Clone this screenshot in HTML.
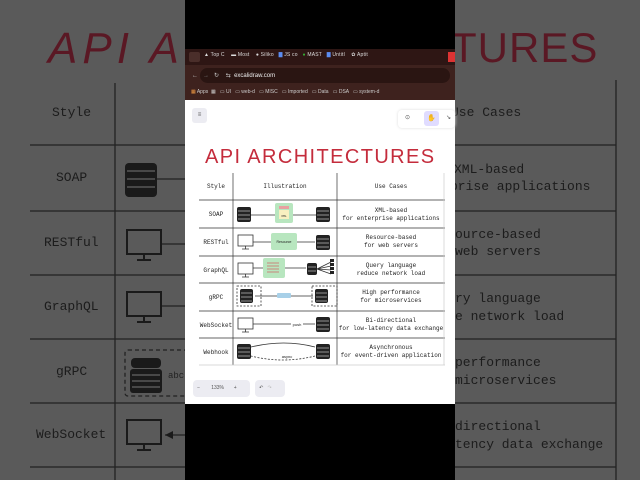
<!DOCTYPE html>
<html><head><meta charset="utf-8"><style>
*{margin:0;padding:0;box-sizing:border-box}
body{width:640px;height:480px;overflow:hidden;background:#000;position:relative;font-family:"Liberation Sans",sans-serif}
.side{position:absolute;top:0;height:480px;background:#5a5a5a;overflow:hidden}
.m{font-family:"Liberation Mono",monospace;color:#1c1c1c;position:absolute;white-space:nowrap}
.t{position:absolute;white-space:nowrap}
</style></head><body>
<!-- left side -->
<div class="side" style="left:0;width:185px">
<svg width="185" height="480" style="position:absolute;left:0;top:0">
<text x="48" y="63" font-family="Liberation Sans" font-style="italic" font-size="44" fill="#5a1824" letter-spacing="5">API A</text>
<g stroke="#222" stroke-width="1.3" fill="none">
<line x1="115" y1="83" x2="115" y2="480"/>
<line x1="30" y1="145" x2="185" y2="145"/><line x1="30" y1="211" x2="185" y2="211"/>
<line x1="30" y1="275" x2="185" y2="275"/><line x1="30" y1="339" x2="185" y2="339"/>
<line x1="30" y1="403" x2="185" y2="403"/><line x1="30" y1="467" x2="185" y2="467"/>
<line x1="157" y1="179" x2="185" y2="179"/><line x1="162" y1="244" x2="185" y2="244"/>
<line x1="162" y1="306" x2="185" y2="306"/><line x1="165" y1="435" x2="185" y2="435"/>
<rect x="125" y="350" width="62" height="46" rx="3" stroke-dasharray="4 3"/>
</g>
<g fill="#1a1a1a">
<rect x="125" y="163" width="32" height="34" rx="4"/><rect x="130" y="369" width="32" height="24" rx="3"/><rect x="131" y="358" width="30" height="10" rx="4"/>
</g>
<g stroke="#777" stroke-width="1"><line x1="127" y1="171" x2="155" y2="171"/><line x1="127" y1="179" x2="155" y2="179"/><line x1="127" y1="187" x2="155" y2="187"/>
<line x1="132" y1="375" x2="160" y2="375"/><line x1="132" y1="381" x2="160" y2="381"/><line x1="132" y1="387" x2="160" y2="387"/></g>
<g stroke="#1a1a1a" stroke-width="2" fill="none">
<rect x="127" y="230" width="34" height="24"/><line x1="137" y1="260" x2="151" y2="260"/><line x1="144" y1="254" x2="144" y2="260"/>
<rect x="127" y="292" width="34" height="24"/><line x1="137" y1="322" x2="151" y2="322"/><line x1="144" y1="316" x2="144" y2="322"/>
<rect x="127" y="420" width="34" height="24"/><line x1="137" y1="450" x2="151" y2="450"/><line x1="144" y1="444" x2="144" y2="450"/>
</g>
<polygon points="165,435 173,431 173,439" fill="#1a1a1a"/>
<text x="168" y="378" font-family="Liberation Mono" font-size="9" fill="#222">abc</text>
</svg>
<div class="m" style="left:52px;top:105px;font-size:13px">Style</div>
<div class="m" style="left:56px;top:170px;font-size:13px">SOAP</div>
<div class="m" style="left:44px;top:235px;font-size:13px">RESTful</div>
<div class="m" style="left:44px;top:299px;font-size:13px">GraphQL</div>
<div class="m" style="left:56px;top:364px;font-size:13px">gRPC</div>
<div class="m" style="left:36px;top:427px;font-size:13px">WebSocket</div>
</div>
<!-- right side -->
<div class="side" style="left:455px;width:185px">
<svg width="185" height="480" style="position:absolute;left:0;top:0">
<text x="-4" y="62" font-family="Liberation Sans" font-size="42" fill="#5a1824" letter-spacing="1">TURES</text>
<g stroke="#222" stroke-width="1.3">
<line x1="161" y1="80" x2="161" y2="480"/>
<line x1="0" y1="145" x2="161" y2="145"/><line x1="0" y1="211" x2="161" y2="211"/>
<line x1="0" y1="275" x2="161" y2="275"/><line x1="0" y1="339" x2="161" y2="339"/>
<line x1="0" y1="403" x2="161" y2="403"/><line x1="0" y1="467" x2="161" y2="467"/>
</g></svg>
<div class="m" style="left:-4px;top:105px;font-size:13px">Use Cases</div>
<div class="m" style="left:-1px;top:162px;font-size:13px">XML-based</div>
<div class="m" style="left:-5px;top:179px;font-size:13px">prise applications</div>
<div class="m" style="left:0px;top:227px;font-size:13px">ource-based</div>
<div class="m" style="left:0px;top:244px;font-size:13px"> web servers</div>
<div class="m" style="left:0px;top:291px;font-size:13px">ry language</div>
<div class="m" style="left:0px;top:309px;font-size:13px">e network load</div>
<div class="m" style="left:0px;top:355px;font-size:13px">  performance</div>
<div class="m" style="left:0px;top:373px;font-size:13px">microservices</div>
<div class="m" style="left:0px;top:419px;font-size:13px"> directional</div>
<div class="m" style="left:0px;top:437px;font-size:13px">tency data exchange</div>
</div>
<!-- center -->
<div style="position:absolute;left:185px;top:49px;width:270px;height:16px;background:#2e1614"></div>
<div style="position:absolute;left:185px;top:65px;width:270px;height:35px;background:#3e221e"></div>
<div style="position:absolute;left:200px;top:68px;width:250px;height:15px;background:#2a1512;border-radius:8px"></div>
<div class="t" style="left:189px;top:52px;width:11px;height:10px;background:#4a2e2a;border-radius:2px"></div>
<div class="t" style="left:204px;top:52px;font-size:5px;color:#ddd;letter-spacing:.2px">▲ Top C &nbsp;&nbsp; ▬ Most &nbsp;&nbsp; ● Siliko &nbsp;&nbsp;<span style="color:#5b8cf0">▇</span> JS co &nbsp;&nbsp;<span style="color:#3a3">●</span> MAST &nbsp;&nbsp;<span style="color:#5b8cf0">▇</span> Untitl &nbsp;&nbsp; ✿ Aptit</div>
<div class="t" style="left:448px;top:52px;width:7px;height:10px;background:#d33"></div>
<div class="t" style="left:192px;top:72px;font-size:6px;color:#ccc">←&nbsp;&nbsp; <span style="color:#777">→</span>&nbsp;&nbsp; ↻&nbsp;&nbsp;&nbsp; ⇆ &nbsp;<span style="color:#eee">excalidraw.com</span></div>
<div class="t" style="left:191px;top:89px;font-size:5px;color:#ccc"><span style="color:#e94">▦</span> Apps &nbsp;▦ &nbsp;&nbsp;▭ UI &nbsp; ▭ web-d &nbsp; ▭ MISC &nbsp; ▭ Imported &nbsp; ▭ Data &nbsp; ▭ DSA &nbsp; ▭ system-d</div>
<div style="position:absolute;left:185px;top:100px;width:270px;height:304px;background:#fff"></div>
<div class="t" style="left:192px;top:108px;width:15px;height:15px;background:#ececf2;border-radius:3px;font-size:6px;color:#555;text-align:center;line-height:15px">≡</div>
<div class="t" style="left:398px;top:110px;width:57px;height:18px;background:#fff;box-shadow:0 0 3px #ddd;border-radius:4px"></div>
<div class="t" style="left:405px;top:114px;font-size:6px;color:#555">⊙</div>
<div class="t" style="left:424px;top:111px;width:15px;height:15px;background:#e0dcff;border-radius:3px;font-size:7px;color:#333;text-align:center;line-height:15px">✋</div>
<div class="t" style="left:446px;top:114px;font-size:6px;color:#555">↘</div>
<div class="t" style="left:205px;top:146px;font-size:20px;color:#c42c3c;letter-spacing:1.4px;font-family:'Liberation Sans',sans-serif">API ARCHITECTURES</div>
<svg width="270" height="304" style="position:absolute;left:185px;top:100px" font-family="Liberation Mono" font-size="6" fill="#222">
<g stroke="#333" stroke-width=".7" fill="none">
<line x1="48" y1="73" x2="48" y2="265"/><line x1="152" y1="73" x2="152" y2="265"/>
<line x1="14" y1="100" x2="260" y2="100"/><line x1="14" y1="128" x2="260" y2="128"/><line x1="14" y1="156" x2="260" y2="156"/>
<line x1="14" y1="183" x2="260" y2="183"/><line x1="14" y1="211" x2="260" y2="211"/><line x1="14" y1="238" x2="260" y2="238"/>
<line x1="14" y1="265" x2="260" y2="265" stroke="#ccc"/>
<line x1="259" y1="73" x2="259" y2="265" stroke="#ccc"/>
</g>
<text x="31" y="88" text-anchor="middle">Style</text><text x="100" y="88" text-anchor="middle">Illustration</text><text x="206" y="88" text-anchor="middle">Use Cases</text>
<text x="31" y="116" text-anchor="middle">SOAP</text><text x="31" y="144" text-anchor="middle">RESTful</text><text x="31" y="172" text-anchor="middle">GraphQL</text>
<text x="31" y="199" text-anchor="middle">gRPC</text><text x="31" y="227" text-anchor="middle">WebSocket</text><text x="31" y="254" text-anchor="middle">Webhook</text>
<text x="206" y="112" text-anchor="middle">XML-based</text><text x="206" y="120" text-anchor="middle">for enterprise applications</text>
<text x="206" y="139" text-anchor="middle">Resource-based</text><text x="206" y="147" text-anchor="middle">for web servers</text>
<text x="206" y="167" text-anchor="middle">Query language</text><text x="206" y="175" text-anchor="middle">reduce network load</text>
<text x="206" y="194" text-anchor="middle">High performance</text><text x="206" y="202" text-anchor="middle">for microservices</text>
<text x="206" y="222" text-anchor="middle">Bi-directional</text><text x="206" y="230" text-anchor="middle">for low-latency data exchange</text>
<text x="206" y="249" text-anchor="middle">Asynchronous</text><text x="206" y="257" text-anchor="middle">for event-driven application</text>
<g fill="#222">
<rect x="52" y="107" width="14" height="15" rx="2"/><rect x="131" y="107" width="14" height="15" rx="2"/>
<rect x="131" y="135" width="14" height="15" rx="2"/><rect x="122" y="163" width="10" height="12" rx="2"/>
<rect x="55" y="189" width="13" height="14" rx="2"/><rect x="130" y="189" width="13" height="14" rx="2"/>
<rect x="131" y="217" width="14" height="15" rx="2"/><rect x="52" y="244" width="14" height="15" rx="2"/><rect x="131" y="244" width="14" height="15" rx="2"/>
</g>
<g stroke="#fff" stroke-width=".6">
<path d="M53 111h12M53 115h12M53 119h12M132 111h12M132 115h12M132 119h12M132 139h12M132 143h12M132 147h12M123 167h8M123 171h8M56 193h11M56 197h11M56 201h11M131 193h11M131 197h11M131 201h11M132 221h12M132 225h12M132 229h12M53 248h12M53 252h12M53 256h12M132 248h12M132 252h12M132 256h12"/>
</g>
<g stroke="#333" stroke-width=".8" fill="none">
<rect x="53" y="135" width="15" height="11"/><path d="M57 149h7M60.5 146v3"/>
<rect x="53" y="163" width="15" height="11"/><path d="M57 177h7M60.5 174v3"/>
<rect x="53" y="218" width="15" height="11"/><path d="M57 232h7M60.5 229v3"/>
<path d="M66 115h65M68 142h62M68 168h53M132 169l14-7M132 169l14-3M132 169l14 1M132 169l14 5M70 196h58M68 224h62"/>
<rect x="52" y="186" width="24" height="20" stroke-dasharray="2 1.5"/><rect x="127" y="186" width="25" height="20" stroke-dasharray="2 1.5"/>
<path d="M66 247q33-8 64 0" /><path d="M130 256q-32 8-64 0" stroke-dasharray="2 1.5"/>
</g>
<g fill="#222"><rect x="145" y="159" width="4" height="3"/><rect x="145" y="163" width="4" height="3"/><rect x="145" y="167" width="4" height="3"/><rect x="145" y="171" width="4" height="3"/></g>
<rect x="90" y="103" width="18" height="20" rx="2" fill="#b8e6bf"/><rect x="94" y="106" width="10" height="3" fill="#e8a0a0"/><rect x="94" y="110" width="10" height="9" fill="#f8f0c0"/><text x="99" y="117" font-size="3" text-anchor="middle">XML</text>
<rect x="86" y="133" width="26" height="17" rx="2" fill="#b8e6bf"/><text x="99" y="143" font-size="3.5" text-anchor="middle" font-family="Liberation Sans">Resource</text>
<rect x="78" y="158" width="22" height="20" rx="2" fill="#b8e6bf"/><path d="M82 163h12M82 166h12M82 169h12M82 172h12" stroke="#c66" stroke-width=".8"/>
<rect x="92" y="193" width="14" height="5" rx="1" fill="#a8d0e8"/>
<rect x="106" y="221" width="12" height="6" fill="#fff"/><text x="112" y="226" font-size="4" text-anchor="middle" font-family="Liberation Sans">push</text>
<rect x="95" y="253" width="14" height="6" fill="#fff"/><text x="102" y="258" font-size="4" text-anchor="middle" font-family="Liberation Sans">async</text>
</svg>
<div class="t" style="left:193px;top:380px;width:57px;height:17px;background:#ececf2;border-radius:4px;font-size:5px;color:#555;line-height:17px">&nbsp;&nbsp; − &nbsp;&nbsp;&nbsp;&nbsp;&nbsp;&nbsp; 133% &nbsp;&nbsp;&nbsp;&nbsp;&nbsp; +</div>
<div class="t" style="left:255px;top:380px;width:30px;height:17px;background:#ececf2;border-radius:4px;font-size:5px;color:#555;line-height:17px">&nbsp;&nbsp; ↶ &nbsp;&nbsp;<span style="color:#bbb">↷</span></div>
</body></html>
